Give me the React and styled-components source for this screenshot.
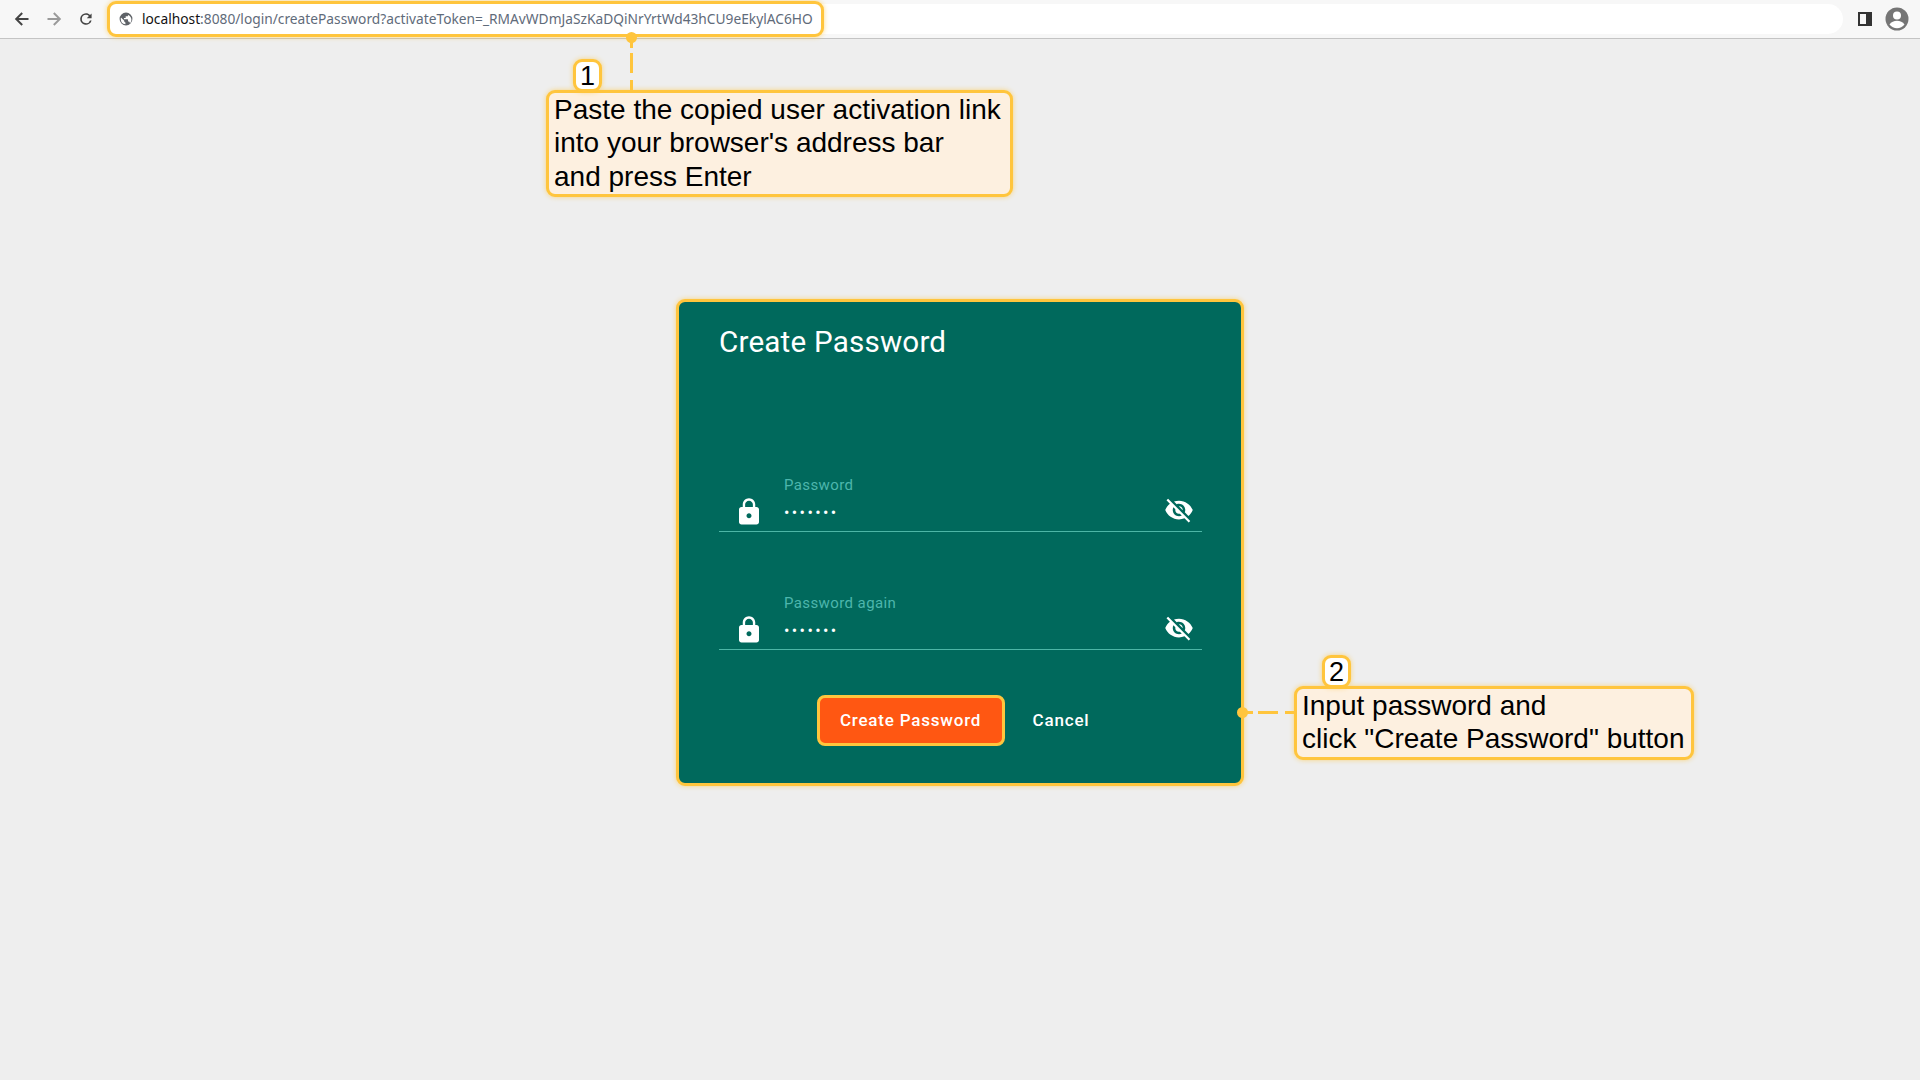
import React from "react"
import styled, { createGlobalStyle } from "styled-components"

const amber = "#ffc53d"
const glow = "0 0 5px rgba(255, 197, 61, 0.65)"

const lockPath = "M18 8h-1V6c0-2.76-2.24-5-5-5S7 3.24 7 6v2H6c-1.1 0-2 .9-2 2v10c0 1.1.9 2 2 2h12c1.1 0 2-.9 2-2V10c0-1.1-.9-2-2-2zm-6 9c-1.1 0-2-.9-2-2s.9-2 2-2 2 .9 2 2-.9 2-2 2zm3.1-9H8.9V6c0-1.71 1.39-3.1 3.1-3.1 1.71 0 3.1 1.39 3.1 3.1v2z"
const eyeOffPath = "M12 7c2.76 0 5 2.24 5 5 0 .65-.13 1.26-.36 1.83l2.92 2.92c1.51-1.26 2.7-2.89 3.43-4.75-1.73-4.39-6-7.5-11-7.5-1.4 0-2.74.25-3.98.7l2.16 2.16C10.74 7.13 11.35 7 12 7zM2 4.27l2.28 2.28.46.46C3.08 8.3 1.78 10.02 1 12c1.73 4.39 6 7.5 11 7.5 1.55 0 3.03-.3 4.38-.84l.42.42L19.73 22 21 20.73 3.27 3 2 4.27zM7.53 9.8l1.55 1.55c-.05.21-.08.43-.08.65 0 1.66 1.34 3 3 3 .22 0 .44-.03.65-.08l1.55 1.55c-.67.33-1.41.53-2.2.53-2.76 0-5-2.24-5-5 0-.79.2-1.53.53-2.2zm4.31-.78l3.15 3.15.02-.16c0-1.66-1.34-3-3-3l-.17.01z"

const Arrow = ({ flip, color }) => (
    <svg width="16" height="16" viewBox="0 0 16 16" style={{ transform: flip ? "scaleX(-1)" : "none" }}>
        <path d="M14.5 7H4.6l4.3-4.3L7.5 1.3.8 8l6.7 6.7 1.4-1.4L4.6 9h9.9z" fill={color} />
    </svg>
)

const Field = ({ label }) => (
    <FieldRow>
        <svg width="30" height="30" viewBox="0 0 24 24"><path d={lockPath} fill="#fff" /></svg>
        <FieldBody>
            <FieldLabel>{label}</FieldLabel>
            <FieldValue>•••••••</FieldValue>
        </FieldBody>
        <EyeIcon width="30" height="30" viewBox="0 0 24 24"><path d={eyeOffPath} fill="#fff" /></EyeIcon>
    </FieldRow>
)

const App = () => {
    return (
        <Page>
            <GlobalStyle />
            <Toolbar>
                <NavButton><Arrow color="#444" /></NavButton>
                <NavButton><Arrow flip color="#9a9a9a" /></NavButton>
                <NavButton>
                    <svg width="16" height="16" viewBox="0 0 16 16">
                        <path d="M13.6 2.4v4.8H8.8l2.1-2.1A4.3 4.3 0 0 0 8 3.8a4.2 4.2 0 1 0 4 5.6h1.6A5.8 5.8 0 1 1 8 2.2c1.6 0 3 .6 4 1.7z" fill="#444" />
                    </svg>
                </NavButton>
                <Omnibox>
                    <UrlBox>
                        <svg width="14" height="14" viewBox="0 0 24 24">
                            <path d="M12 1a11 11 0 1 0 0 22 11 11 0 0 0 0-22zM3 12c0-.9.1-1.700.4-2.500L9 15v1c0 1.100.900 2 2 2v3a9 9 0 0 1-8-9zm15.500 5.800A2 2 0 0 0 16.600 16.400H15.500v-3c0-.600-.400-1-1-1h-6v-2h2c.600 0 1-.400 1-1v-2h2a2 2 0 0 0 2-2v-.400a9 9 0 0 1 3 14.800z" fill="#5f6368" />
                        </svg>
                        <UrlText><b>localhost</b>:8080/login/createPassword?activateToken=_RMAvWDmJaSzKaDQiNrYrtWd43hCU9eEkylAC6HO</UrlText>
                    </UrlBox>
                </Omnibox>
                <SideIcon />
                <Avatar>
                    <svg width="26" height="26" viewBox="0 0 26 26">
                        <circle cx="13" cy="13" r="11.500" fill="#757575" />
                        <circle cx="13" cy="9.500" r="4" fill="#fff" />
                        <path d="M5.500 18.500c1.600-2.600 4.600-3.700 7.500-3.700s5.900 1.100 7.500 3.700a9.500 9.500 0 0 1-15 0z" fill="#fff" />
                    </svg>
                </Avatar>
            </Toolbar>

            <Main>
                <Card>
                    <Title>Create Password</Title>
                    <Fields>
                        <Field label="Password" />
                        <Field label="Password again" />
                    </Fields>
                    <Actions>
                        <PrimaryButton>Create Password</PrimaryButton>
                        <TextButton>Cancel</TextButton>
                    </Actions>
                </Card>
            </Main>

            <Dot x={631} y={37} />
            <VDash />
            <Badge x={573} y={59}>1</Badge>
            <Note x={546} y={90} w={467}>
                Paste the copied user activation link<br />
                into your browser's address bar<br />
                and press Enter
            </Note>

            <Dot x={1242} y={712} />
            <HDash />
            <Badge x={1322} y={655}>2</Badge>
            <Note x={1294} y={686} w={400}>
                Input password and<br />
                click "Create Password" button
            </Note>
        </Page>
    )
}

export default App

const GlobalStyle = createGlobalStyle`
html, body {
    margin: 0;
    padding: 0;
    background: #eeeeee;
}
`

const Page = styled.div`
position: relative;
width: 1920px;
height: 1080px;
overflow: hidden;
background: #eeeeee;
font-family: "Roboto", sans-serif;
`

const Toolbar = styled.div`
height: 38px;
display: flex;
align-items: center;
padding-left: 6px;
background: #f7f7f7;
border-bottom: 1px solid #c4c4c4;
`

const NavButton = styled.div`
width: 32px;
height: 32px;
display: flex;
justify-content: center;
align-items: center;
`

const Omnibox = styled.div`
width: 1736px;
height: 30px;
margin-left: 5px;
display: flex;
align-items: center;
background: #fff;
border-radius: 15px;
`

const UrlBox = styled.div`
width: 717px;
height: 36px;
box-sizing: border-box;
display: flex;
align-items: center;
gap: 9px;
padding: 0 0 1px 9px;
background: #fff;
border: 3px solid ${amber};
border-radius: 9px;
box-shadow: ${glow};
`

const UrlText = styled.span`
font-family: "Noto Sans", sans-serif;
font-size: 13.75px;
color: #5f6b7a;
white-space: nowrap;

b {
    font-weight: 400;
    color: #111;
}
`

const SideIcon = styled.div`
width: 14px;
height: 14px;
margin-left: 15px;
box-sizing: border-box;
border: 2px solid #333;
border-right-width: 6px;
`

const Avatar = styled.div`
margin-left: 12px;
width: 26px;
height: 26px;
`

const Main = styled.div`
display: flex;
justify-content: center;
padding-top: 260px;
`

const Card = styled.div`
width: 568px;
height: 487px;
box-sizing: border-box;
padding: 0 39px 0 40px;
display: flex;
flex-direction: column;
background: #00695c;
border: 3px solid ${amber};
border-radius: 9px;
box-shadow: ${glow};
`

const Title = styled.div`
margin-top: 21px;
font-size: 29.6px;
line-height: 38px;
letter-spacing: 0.2px;
color: #fff;
`

const Fields = styled.div`
margin-top: 112px;
display: flex;
flex-direction: column;
gap: 59px;
`

const FieldRow = styled.div`
height: 59px;
box-sizing: border-box;
display: flex;
align-items: flex-end;
padding: 0 8px 4px 15px;
border-bottom: 1px solid #4db6a6;
`

const FieldBody = styled.div`
flex: 1;
margin: 2px 0 0 20px;
align-self: flex-start;
`

const FieldLabel = styled.div`
font-size: 15px;
line-height: 21px;
letter-spacing: 0.4px;
color: #4db6ac;
`

const FieldValue = styled.div`
margin-top: 8px;
font-size: 16px;
line-height: 18px;
letter-spacing: 2.4px;
color: #fff;
`

const EyeIcon = styled.svg`
margin-bottom: 2px;
`

const Actions = styled.div`
margin-top: 45px;
display: flex;
justify-content: center;
align-items: center;
gap: 28px;
padding-right: 15px;
`

const PrimaryButton = styled.div`
width: 188px;
height: 51px;
box-sizing: border-box;
display: flex;
justify-content: center;
align-items: center;
padding-bottom: 2px;
background: #ff5712;
border: 3px solid ${amber};
border-radius: 8px;
font-size: 17px;
font-weight: 500;
letter-spacing: 0.8px;
color: #fff;
`

const TextButton = styled.div`
padding-bottom: 2px;
font-size: 17px;
font-weight: 500;
letter-spacing: 0.8px;
color: #fff;
`

const Note = styled.div`
position: absolute;
left: ${(props) => props.x}px;
top: ${(props) => props.y}px;
width: ${(props) => props.w}px;
box-sizing: border-box;
padding: 0 5px 1px 5px;
background: #fdf0e0;
border: 3px solid ${amber};
border-radius: 9px;
box-shadow: ${glow};
font-family: "Liberation Sans", Arial, sans-serif;
font-size: 28px;
line-height: 33.4px;
color: #000;
white-space: nowrap;
`

const Badge = styled.div`
position: absolute;
left: ${(props) => props.x}px;
top: ${(props) => props.y}px;
z-index: 2;
width: 29px;
height: 33px;
box-sizing: border-box;
display: flex;
justify-content: center;
align-items: center;
padding-top: 2px;
background: #fff;
border: 3px solid ${amber};
border-radius: 9px;
box-shadow: ${glow};
font-family: "Liberation Sans", Arial, sans-serif;
font-size: 27px;
color: #000;
`

const Dot = styled.div`
position: absolute;
left: ${(props) => props.x - 5.5}px;
top: ${(props) => props.y - 5.5}px;
width: 11px;
height: 11px;
border-radius: 50%;
background: ${amber};
`

const dashStops = `${amber} 0 10px, transparent 10px 15px, ${amber} 15px 35px, transparent 35px 42px, ${amber} 42px 52px`

const VDash = styled.div`
position: absolute;
left: 630px;
top: 38px;
width: 3px;
height: 52px;
background: linear-gradient(to bottom, ${dashStops});
`

const HDash = styled.div`
position: absolute;
left: 1243px;
top: 711px;
width: 52px;
height: 3px;
background: linear-gradient(to right, ${dashStops});
`
